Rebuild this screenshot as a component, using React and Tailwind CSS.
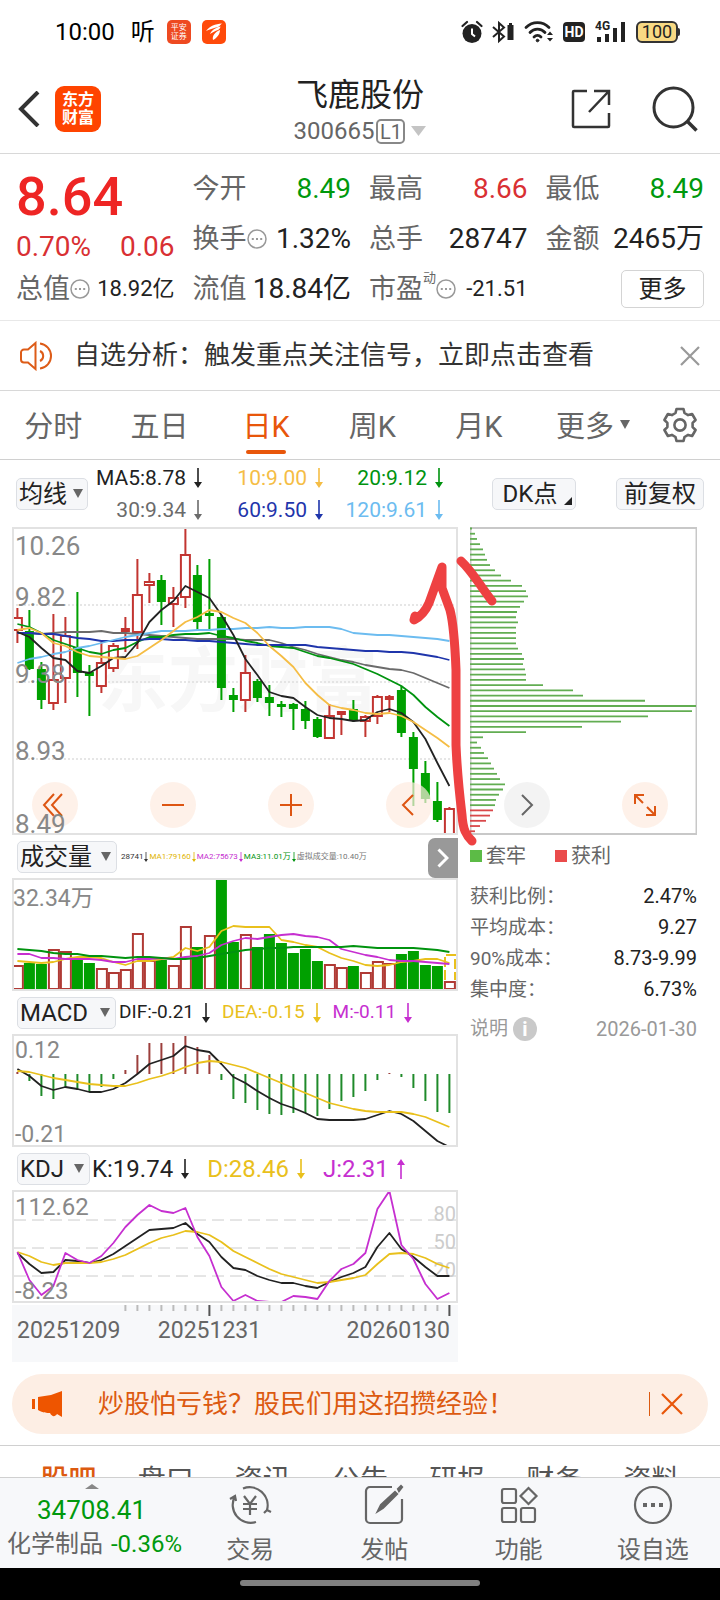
import clsx from "clsx";

const RED = "#c23531";
const GREEN = "#00a000";

// [up, high, body top, body bottom, low]
const candles = [
  [1, 81, 90, 104, 116], [0, 83, 104, 142, 143], [0, 135, 142, 173, 182], [1, 87, 152, 177, 183],
  [1, 90, 108, 152, 176], [0, 65, 120, 146, 170], [0, 138, 145, 149, 189], [1, 115, 135, 160, 166],
  [1, 116, 118, 142, 145], [1, 90, 101, 105, 125], [1, 32, 67, 106, 122], [1, 46, 54, 59, 76],
  [0, 48, 53, 75, 98], [1, 60, 70, 78, 100], [1, 1, 27, 71, 81], [0, 38, 48, 95, 103],
  [0, 32, 86, 88, 103], [0, 88, 90, 161, 173], [0, 161, 168, 173, 185], [1, 128, 145, 174, 185],
  [0, 152, 154, 171, 175], [0, 158, 170, 176, 189], [0, 174, 177, 179, 190], [0, 176, 177, 182, 203],
  [0, 174, 182, 194, 202], [0, 190, 192, 210, 211], [1, 177, 188, 212, 212], [1, 184, 184, 188, 208],
  [0, 173, 182, 194, 195], [1, 188, 189, 195, 210], [1, 168, 169, 190, 197], [1, 168, 169, 173, 185],
  [0, 159, 163, 206, 210], [0, 205, 210, 242, 279], [0, 234, 246, 272, 276], [0, 255, 274, 293, 295],
  [1, 280, 281, 308, 308],
];

const ma = [
  { color: "#6b6b6b", data: [106, 106, 107, 106, 105, 105, 105, 104, 106, 106, 107, 108, 109, 110, 111, 112, 112, 112, 112, 113, 113, 113, 116, 120, 123, 127, 130, 133, 135, 138, 140, 142, 143, 146, 151, 156, 161] },
  { color: "#00930f", data: [97, 100, 106, 113, 117, 121, 125, 127, 123, 121, 115, 110, 110, 108, 107, 107, 106, 109, 111, 114, 116, 119, 120, 121, 125, 129, 131, 134, 137, 142, 147, 153, 159, 168, 180, 190, 199] },
  { color: "#1f35ab", data: [106, 106, 107, 107, 109, 111, 112, 114, 114, 113, 113, 112, 112, 113, 113, 114, 114, 115, 116, 117, 118, 118, 118, 118, 118, 120, 121, 122, 123, 124, 124, 125, 125, 126, 128, 130, 133] },
  { color: "#6cbcf0", data: [136, 132, 130, 127, 125, 121, 119, 116, 113, 110, 108, 106, 104, 104, 104, 103, 103, 102, 102, 101, 101, 100, 101, 101, 100, 100, 100, 102, 106, 107, 108, 108, 109, 110, 111, 112, 114] },
  { color: "#222222", data: [105, 110, 121, 131, 133, 144, 146, 139, 131, 130, 116, 95, 83, 74, 59, 65, 71, 88, 108, 132, 148, 165, 169, 171, 180, 188, 191, 192, 194, 193, 185, 182, 186, 195, 212, 236, 259] },
  { color: "#f5bd45", data: [103, 101, 106, 116, 119, 125, 129, 130, 131, 132, 129, 121, 113, 104, 95, 90, 83, 85, 91, 96, 106, 119, 129, 140, 156, 168, 178, 181, 183, 186, 187, 186, 189, 195, 203, 211, 220] },
];

const volumes = [
  [1, 87], [0, 85], [0, 86], [1, 71], [1, 73], [0, 80], [0, 85], [1, 90], [1, 94], [1, 91], [1, 55], [1, 82], [0, 82],
  [1, 87], [1, 48], [0, 69], [1, 57], [0, 1], [0, 64], [1, 56], [0, 69], [0, 56], [0, 65], [0, 75], [0, 71], [0, 83],
  [1, 86], [1, 89], [0, 88], [1, 94], [1, 83], [1, 85], [0, 76], [0, 73], [0, 87], [0, 88], [1, 103],
];

const volumeMa = [
  { color: "#e9c01c", data: [83, 84, 85, 84, 81, 79, 79, 80, 84, 87, 83, 83, 81, 79, 70, 73, 69, 53, 48, 49, 49, 49, 62, 64, 67, 69, 75, 80, 83, 87, 88, 87, 84, 83, 81, 81, 85] },
  { color: "#c62fd0", data: [76, 76, 80, 80, 81, 81, 81, 82, 84, 84, 81, 81, 80, 81, 79, 78, 75, 67, 63, 60, 61, 59, 57, 56, 58, 59, 62, 71, 74, 77, 79, 82, 83, 83, 84, 85, 86] },
  { color: "#00930f", data: [71, 72, 73, 75, 76, 76, 78, 78, 79, 80, 79, 79, 80, 81, 81, 80, 78, 76, 74, 72, 71, 70, 70, 69, 69, 69, 69, 69, 68, 69, 70, 70, 70, 70, 71, 72, 74] },
];

const macdBars = [
  38, 47, 62, 65, 53, 56, 58, 53, 45, 36, 21, 9, 9, 9, 0, 13, 21, 46, 65, 69, 76, 80, 81, 79, 79, 82, 75, 67, 63, 57, 46,
  39, 43, 54, 67, 78, 79,
];

const macdLines = [
  { color: "#222222", data: [35, 42, 52, 56, 53, 55, 58, 58, 55, 49, 40, 30, 26, 22, 12, 16, 18, 30, 43, 49, 57, 64, 70, 74, 79, 85, 86, 86, 86, 85, 81, 77, 80, 87, 97, 107, 113] },
  { color: "#e9c01c", data: [37, 38, 41, 44, 46, 48, 50, 51, 52, 52, 49, 45, 42, 38, 33, 29, 27, 28, 31, 34, 39, 44, 49, 54, 59, 64, 69, 72, 75, 77, 78, 78, 78, 80, 83, 88, 93] },
];

const kdjLines = [
  { color: "#222222", data: [63, 74, 83, 82, 70, 71, 73, 70, 64, 56, 48, 40, 39, 38, 33, 44, 52, 67, 78, 80, 86, 90, 93, 93, 96, 98, 92, 87, 83, 77, 57, 43, 59, 67, 77, 86, 86] },
  { color: "#e9c01c", data: [62, 66, 72, 75, 73, 73, 73, 72, 69, 65, 59, 53, 48, 45, 41, 42, 45, 52, 61, 67, 73, 79, 84, 87, 90, 93, 92, 90, 88, 85, 74, 64, 63, 64, 68, 74, 78] },
  { color: "#c62fd0", data: [62, 90, 105, 96, 63, 70, 73, 66, 53, 37, 25, 15, 21, 23, 18, 47, 66, 97, 111, 105, 111, 112, 112, 106, 107, 109, 91, 79, 74, 63, 19, 1, 55, 69, 94, 109, 103] },
];

const chips = [
  2, 5, 7, 10, 13, 15, 17, 20, 25, 31, 41, 52, 56, 58, 54, 50, 47, 46, 48, 46, 46, 46, 46, 48, 52, 54, 53, 55, 56, 56, 73,
  103, 113, 175, 226, 222, 178, 151, 112, 56, 13, 7, 11, 14, 18, 21, 24, 27, 30, 35, 33, 29, 26, 25, 23, 20, 16, 10, 5,
];

const stats = [
  { label: "获利比例：", value: "2.47%" },
  { label: "平均成本：", value: "9.27" },
  { label: "90%成本：", value: "8.73-9.99" },
  { label: "集中度：", value: "6.73%" },
];

const barX = (i) => 5.4 + i * 12;

const Lines = ({ series }) =>
  series.map(({ color, data }) => (
    <polyline
      key={color}
      points={data.map((y, i) => `${barX(i)},${y}`).join(" ")}
      fill="none"
      stroke={color}
      strokeWidth="1.8"
      strokeLinejoin="round"
    />
  ));

const Arrow = ({ up, className }) => (
  <svg viewBox="0 0 8 20" className={clsx("h-5 w-2 shrink-0", up && "rotate-180", className)} fill="currentColor">
    <path d="M3.2 0h1.6v14H8L4 20 0 14h3.2z" />
  </svg>
);

const Caret = ({ className }) => (
  <svg viewBox="0 0 10 9" preserveAspectRatio="none" className={className} fill="currentColor">
    <path d="M0 0h10L5 9z" />
  </svg>
);

const IndicatorSelect = ({ name, label, className, caret }) => (
  <label className={clsx("relative shrink-0", className)}>
    <span className="sr-only">{label}</span>
    <select className="block h-8 w-full appearance-none rounded-[5px] border border-[#dcdfe4] bg-[#f6f7f9] pl-0.5 text-2xl leading-[30px] text-[#222]">
      <option>{name}</option>
    </select>
    <Caret className={clsx("pointer-events-none absolute top-[11px] h-[9px] w-[10px] text-[#666]", caret)} />
  </label>
);

const Dots = () => (
  <svg viewBox="0 0 20 20" className="h-5 w-5 shrink-0" fill="none" stroke="#999" strokeWidth="1.5">
    <circle cx="10" cy="10" r="9" />
    <path d="M4.8 10h2M9 10h2M13.2 10h2" strokeWidth="2.2" />
  </svg>
);

const Quote = ({ label, value, color = "text-[#222]", small, dots, mark }) => (
  <div className="flex items-center justify-between whitespace-nowrap leading-[50px]">
    <span className="flex items-center text-[27px] text-[#666]">
      {label}
      {mark && <sup className="-top-3 text-[13px] leading-none">{mark}</sup>}
      {dots && <Dots />}
    </span>
    <span className={clsx(small ? "text-[22px]" : "text-[28px]", color)}>{value}</span>
  </div>
);

const StatusBar = () => (
  <div className="flex h-16 items-center pl-[55px] pr-10 text-2xl text-black">
    <span>10:00</span>
    <span className="ml-4">听</span>
    <span className="ml-3 flex h-6 w-6 flex-col items-center justify-center rounded-[5px] bg-[#ee4a21] text-[8px] leading-[9px] text-white">
      <span>平安</span>
      <span>证券</span>
    </span>
    <span className="ml-[11px] flex h-6 w-6 items-center justify-center rounded-[5px] bg-[#ff4a0a]">
      <svg viewBox="0 0 24 24" className="h-6 w-6" fill="#fff">
        <path d="M4 11C8 6 13 4 20 3.500C18 5 18 6 16 7C12 8 8 9 4 11zM8 14C10 10 13 8 18.500 6.500C18 9 17 9 16 10C13 11 11 12 8 14zM11 20C10 16 13 12 18 10C18 14 15 18 11 20z" />
      </svg>
    </span>
    <div className="ml-auto flex items-center">
      <svg viewBox="0 0 22 24" className="h-6 w-[22px]">
        <circle cx="11" cy="13.500" r="9.500" fill="#222" />
        <path d="M1.500 6L6 2M20.500 6L16 2" stroke="#222" strokeWidth="2.200" strokeLinecap="round" />
        <path d="M11 8.500v5.500l3 2.500" stroke="#fff" strokeWidth="2" fill="none" />
      </svg>
      <svg viewBox="0 0 24 24" className="ml-2 h-6 w-6" fill="none" stroke="#222" strokeWidth="2">
        <path d="M2 7l11 9.500-5 4.500V3l5 4.500L2 17" />
        <path d="M16.500 5h6v15h-6zM18 3h3v3h-3z" fill="#222" stroke="none" />
      </svg>
      <svg viewBox="0 0 32 24" className="ml-2 h-6 w-8" fill="none" stroke="#222" strokeWidth="2.800" strokeLinecap="round">
        <path d="M3 7.500C9.500 1 19.500 1 26 7.500M7 12.500c4-4.500 11-4.500 15 0M11 17c2-2 5-2 7 0" />
        <circle cx="14.500" cy="20.500" r="1.300" fill="#222" strokeWidth="1" />
        <path d="M24 15l3-3.500 3 3.500zM24 18l3 3.500 3-3.500z" fill="#222" stroke="none" />
      </svg>
      <span className="ml-2 flex h-5 w-[22px] items-center justify-center rounded-[4px] bg-[#222] text-sm font-bold leading-5 text-white">
        HD
      </span>
      <svg viewBox="0 0 32 24" className="ml-[10px] h-6 w-8" fill="#222">
        <text x="0" y="10" fontSize="12" fontWeight="700">4G</text>
        <path d="M2 17h4v5H2zM10 14h4v8h-4zM18 8h4v14h-4zM26 2h4v20h-4z" />
      </svg>
      <span className="ml-[9px] flex h-[22px] w-[42px] items-center justify-center rounded-[6px] border-2 border-[#333] bg-[#f8d983] text-lg leading-4 text-[#222]">
        100
      </span>
      <span className="h-2 w-[2px] rounded-r bg-[#333]" />
    </div>
  </div>
);

const Header = () => (
  <header className="flex h-[90px] justify-between border-b border-[#d8d8d8] pl-[18px] pr-[22px]">
    <div className="flex flex-1 items-center">
      <button aria-label="返回">
        <svg viewBox="0 0 22 36" className="h-9 w-[22px]" fill="none" stroke="#333" strokeWidth="4">
          <path d="M20 1L3 18l17 17" />
        </svg>
      </button>
      <span className="ml-[15px] flex h-[46px] w-[46px] flex-col items-center justify-center rounded-[9px] bg-[#ff4400] text-base font-bold leading-[18px] text-white">
        <span>东方</span>
        <span>财富</span>
      </span>
    </div>
    <div className="flex flex-col items-center pl-1 pt-3">
      <h1 className="text-[32px] leading-[38px] text-[#222]">飞鹿股份</h1>
      <button className="flex items-center text-2xl leading-[34px] text-[#666]">
        300665
        <span className="ml-0.5 h-[25px] w-[29px] rounded-[5px] border-2 border-[#888] text-center text-xl leading-[22px]">L1</span>
        <Caret className="ml-1.5 h-[10px] w-[15px] text-[#c4c4c4]" />
      </button>
    </div>
    <div className="flex flex-1 items-center justify-end gap-10">
      <button aria-label="分享">
        <svg viewBox="0 0 42 42" className="h-[42px] w-[42px]" fill="none" stroke="#333" strokeWidth="2.500">
          <path d="M17 3H4a1 1 0 0 0-1 1v34a1 1 0 0 0 1 1h34a1 1 0 0 0 1-1V25M24 3h15v14M39 3L19 24" />
        </svg>
      </button>
      <button aria-label="搜索">
        <svg viewBox="0 0 46 46" className="h-[46px] w-[46px]" fill="none" stroke="#333" strokeWidth="3">
          <circle cx="21.500" cy="21.500" r="19.500" />
          <path d="M35 35l9.500 9.500" strokeWidth="3.500" />
        </svg>
      </button>
    </div>
  </header>
);

const QuotePanel = () => (
  <section className="grid grid-cols-4 gap-x-[18px] border-b border-[#e8e8e8] px-4 pb-1.5 pt-[10px]">
    <div className="row-span-2 text-[#d93033]">
      <div className="text-[54px] font-medium leading-[66px] text-[#ee2524]">8.64</div>
      <div className="flex justify-between text-[28px] leading-[34px]">
        <span>0.70%</span>
        <span>0.06</span>
      </div>
    </div>
    <Quote label="今开" value="8.49" color="text-[#00990d]" />
    <Quote label="最高" value="8.66" color="text-[#d93033]" />
    <Quote label="最低" value="8.49" color="text-[#00990d]" />
    <Quote label="换手" value="1.32%" dots />
    <Quote label="总手" value="28747" />
    <Quote label="金额" value="2465万" />
    <Quote label="总值" value="18.92亿" small dots />
    <Quote label="流值" value="18.84亿" />
    <Quote label="市盈" value="-21.51" small dots mark="动" />
    <div className="flex items-center justify-end">
      <button className="h-[38px] w-[83px] rounded-[5px] border border-[#d4d4d4] text-2xl leading-9 text-[#222]">更多</button>
    </div>
  </section>
);

const Notice = () => (
  <div className="flex h-[70px] items-center border-b border-[#d8d8d8] px-5 text-[26px] text-[#333]">
    <svg viewBox="0 0 34 30" className="h-[30px] w-[34px]" fill="none" stroke="#dd5c18" strokeWidth="2">
      <path d="M15.500 2v26L8 21.500H4a3 3 0 0 1-3-3v-7a3 3 0 0 1 3-3h4zM20 10a5.500 5.500 0 0 1 0 10M20 2.500a12.600 12.600 0 0 1 0 25" />
    </svg>
    <span className="ml-5">自选分析：触发重点关注信号，立即点击查看</span>
    <button aria-label="关闭" className="ml-auto">
      <svg viewBox="0 0 20 20" className="h-5 w-5" fill="none" stroke="#999" strokeWidth="2.200">
        <path d="M1 1l18 18M19 1L1 19" />
      </svg>
    </button>
  </div>
);

const Tabs = () => (
  <nav className="flex h-[69px] border-b border-[#d0d0d0] pr-[14px] text-[29px] text-[#666]">
    {["分时", "五日", "日K", "周K", "月K"].map((tab) => (
      <button key={tab} className={clsx("relative flex-1 pt-1.5", tab === "日K" && "text-[#e8560a]")}>
        {tab}
        {tab === "日K" && <span className="absolute inset-x-0 bottom-[5px] mx-auto h-1 w-10 rounded-full bg-[#e8560a]" />}
      </button>
    ))}
    <button className="flex w-[122px] items-center justify-center gap-1.5 pt-1.5">
      更多
      <Caret className="mb-2 h-[9px] w-[10px]" />
    </button>
    <button aria-label="设置" className="flex w-[52px] items-center justify-center">
      <svg viewBox="-18 -18 36 36" className="h-9 w-9" fill="none" stroke="#666" strokeWidth="2.600" strokeLinejoin="round">
        <path d="M-4.500-12L-3.500-16H3.500L4.500-12 8.100-9.900 12.100-11 15.600-5 12.600-2.100V2.100L15.600 5 12.100 11 8.100 9.900 4.500 12 3.500 16H-3.500L-4.500 12-8.100 9.900-12.100 11-15.600 5-12.600 2.100V-2.100L-15.600-5-12.100-11-8.100-9.900z" />
        <circle r="5.600" />
      </svg>
    </button>
  </nav>
);

const Toolbar = () => (
  <div className="flex h-[67px] items-center pl-4 pr-4">
    <IndicatorSelect name="均线" label="主图指标" className="w-[72px]" caret="right-[5px]" />
    <div className="grid flex-1 grid-cols-[114fr_121fr_120fr] gap-y-1 text-[21px] leading-7">
      {[
        ["MA5:8.78", "text-[#222]"],
        ["10:9.00", "text-[#f5bd45]"],
        ["20:9.12", "text-[#00930f]"],
        ["30:9.34", "text-[#6b6b6b]"],
        ["60:9.50", "text-[#1f35ab]"],
        ["120:9.61", "text-[#6cbcf0]"],
      ].map(([text, color]) => (
        <span key={text} className={clsx("flex items-center justify-end gap-2", color)}>
          {text}
          <Arrow />
        </span>
      ))}
    </div>
    <button className="relative ml-[49px] h-8 w-[84px] rounded-[5px] border border-[#dcdfe4] bg-[#f6f7f9] pr-2 text-2xl leading-[30px] text-[#222]">
      DK点
      <svg viewBox="0 0 8 8" className="absolute bottom-1 right-[3px] h-2 w-2" fill="#222">
        <path d="M8 0v8H0z" />
      </svg>
    </button>
    <button className="ml-10 h-8 w-[88px] rounded-[5px] border border-[#dcdfe4] bg-[#f6f7f9] text-2xl leading-[30px] text-[#222]">
      前复权
    </button>
  </div>
);

const Plot = ({ height, children }) => (
  <svg viewBox={`0 0 446 ${height}`} preserveAspectRatio="none" className="relative block h-full w-full">
    {children}
    <rect x="1" y="1" width="444" height={height - 2} fill="none" stroke="#e2e2e2" strokeWidth="2" />
  </svg>
);

const PriceChart = () => (
  <div className="relative h-[308px]">
    <div className="absolute inset-x-0 top-[119px] pl-[86px] text-[70px] font-bold leading-[72px] text-[#f7f7f7]">东方财富</div>
    <Plot height={308}>
      {[78, 155, 232].map((y) => (
        <path key={y} d={`M0 ${y}h446`} stroke="#dedede" strokeWidth="1.500" strokeDasharray="2 2" />
      ))}
      {candles.map(([up, high, top, bottom, low], i) => {
        const x = barX(i);
        const hollow = up && bottom - top > 4;
        return (
          <g key={i} stroke={up ? RED : GREEN} strokeWidth="2">
            <path d={`M${x} ${high}V${top}M${x} ${bottom}V${low}`} />
            <rect
              x={x - (hollow ? 4.5 : 3.5)}
              y={top + 1}
              width={hollow ? 9 : 7}
              height={Math.max(bottom - top - 2, 1)}
              fill={hollow ? "#fff" : up ? RED : GREEN}
            />
          </g>
        );
      })}
      <Lines series={ma} />
    </Plot>
    <div className="pointer-events-none absolute inset-0 z-10 text-[26px] leading-8 text-[#888]">
      <span className="absolute left-[3px] top-[3px]">10.26</span>
      <span className="absolute left-[3px] top-[54px]">9.82</span>
      <span className="absolute left-[3px] top-[131px]">9.38</span>
      <span className="absolute left-[3px] top-[208px]">8.93</span>
      <span className="absolute left-[3px] top-[281px]">8.49</span>
    </div>
  </div>
);

const VolumeChart = () => (
  <>
    <div className="flex h-[43px] items-center pl-[5px]">
      <IndicatorSelect name="成交量" label="副图指标一" className="w-[100px]" caret="right-[6px]" />
      <div className="ml-1 flex items-center gap-px whitespace-nowrap text-[8px] text-[#333]">
        <span>28741</span>
        <Arrow className="h-3! w-1!" />
        <span className="text-[#e0b400]">MA1:79160</span>
        <Arrow className="h-3! w-1! text-[#e0b400]" />
        <span className="text-[#c62fd0]">MA2:75673</span>
        <Arrow className="h-3! w-1! text-[#c62fd0]" />
        <span className="text-[#00930f]">MA3:11.01万</span>
        <Arrow className="h-3! w-1! text-[#00930f]" />
        <span className="text-[#777]">虚拟成交量:10.40万</span>
      </div>
      <button aria-label="展开" className="ml-auto flex h-10 w-[30px] items-center justify-center self-end rounded-l-[7px] bg-[#999]">
        <svg viewBox="0 0 12 20" className="h-5 w-3" fill="none" stroke="#fff" strokeWidth="3">
          <path d="M1.500 1.500L10 10l-8.500 8.500" />
        </svg>
      </button>
    </div>
    <div className="relative h-[113px]">
      <Plot height={113}>
        {volumes.map(([up, top], i) => (
          <rect
            key={i}
            x={barX(i) - (up ? 4.5 : 5.5)}
            y={up ? top + 1 : top}
            width={up ? 10 : 11}
            height={up ? 110 - top : 112 - top}
            fill={up ? "#fff" : GREEN}
            stroke={up ? "#b03a35" : "none"}
            strokeWidth="2"
          />
        ))}
        <path d="M433 102V77h10v25" fill="none" stroke="#e9c01c" strokeWidth="2" strokeDasharray="10 3" />
        <Lines series={volumeMa} />
      </Plot>
      <span className="absolute left-px top-[5px] text-[23px] leading-8 text-[#888]">32.34万</span>
    </div>
  </>
);

const MacdChart = () => (
  <>
    <div className="flex h-[43px] items-center pl-[5px]">
      <IndicatorSelect name="MACD" label="副图指标二" className="w-[99px]" caret="right-[6px]" />
      <div className="ml-[3px] flex items-center gap-2 whitespace-nowrap text-[19px] text-[#222]">
        <span>DIF:-0.21</span>
        <Arrow />
        <span className="ml-1 text-[#e9c01c]">DEA:-0.15</span>
        <Arrow className="text-[#e9c01c]" />
        <span className="ml-1 text-[#c62fd0]">M:-0.11</span>
        <Arrow className="text-[#c62fd0]" />
      </div>
    </div>
    <div className="relative h-[113px]">
      <Plot height={113}>
        {macdBars.map((y, i) => (
          <path key={i} d={`M${barX(i)} 40V${y}`} stroke={y < 40 ? "#9c3f3c" : "#1f8a2a"} strokeWidth="2" />
        ))}
        <Lines series={macdLines} />
      </Plot>
      <span className="absolute left-[3px] top-[1px] text-[23px] leading-8 text-[#888]">0.12</span>
      <span className="absolute left-[3px] top-[85px] text-[23px] leading-8 text-[#888]">-0.21</span>
    </div>
  </>
);

const KdjChart = () => (
  <>
    <div className="flex h-[43px] items-center pl-[5px]">
      <IndicatorSelect name="KDJ" label="副图指标三" className="w-[73px]" caret="right-[6px]" />
      <div className="ml-0.5 flex items-center gap-2 whitespace-nowrap text-2xl text-[#222]">
        <span>K:19.74</span>
        <Arrow />
        <span className="ml-2.5 text-[#e9c01c]">D:28.46</span>
        <Arrow className="text-[#e9c01c]" />
        <span className="ml-2.5 text-[#c62fd0]">J:2.31</span>
        <Arrow up className="text-[#c62fd0]" />
      </div>
    </div>
    <div className="relative h-[113px]">
      <div className="absolute inset-0 text-right text-xl leading-7 text-[#ccc]">
        <span className="absolute right-[2px] top-[10px]">80</span>
        <span className="absolute right-[2px] top-[38px]">50</span>
        <span className="absolute right-[2px] top-[66px]">20</span>
      </div>
      <Plot height={113}>
        {[30, 58, 86].map((y) => (
          <path key={y} d={`M2 ${y}h442`} stroke="#ccc" strokeWidth="1" strokeDasharray="12 6" />
        ))}
        <Lines series={kdjLines} />
      </Plot>
      <span className="absolute left-[3px] top-[1px] text-2xl leading-8 text-[#888]">112.62</span>
      <span className="absolute left-[3px] top-[85px] text-2xl leading-8 text-[#888]">-8.23</span>
    </div>
    <div className="mt-0.5 h-[57px] bg-[#f7f8fa] text-[23px] text-[#666]">
      <svg viewBox="0 0 446 12" preserveAspectRatio="none" className="block h-3 w-full">
        {candles.slice(9).map((_, i) => {
          const major = i === 7 || i === 27;
          return (
            <path key={i} d={`M${barX(i + 9)} 0v${major ? 11 : 6}`} stroke={major ? "#555" : "#bbb"} strokeWidth="2" />
          );
        })}
      </svg>
      <div className="flex justify-between pl-[5px] pr-2 leading-7">
        <span>20251209</span>
        <span className="mr-12">20251231</span>
        <span>20260130</span>
      </div>
    </div>
  </>
);

const ChipPanel = () => (
  <div>
    <svg viewBox="0 0 227 308" preserveAspectRatio="none" className="block h-[308px] w-full">
      <rect x="0.5" y="1" width="226" height="306" fill="none" stroke="#c8c8c8" strokeWidth="2" />
      {chips.map((w, i) => (
        <path key={i} d={`M0 ${1.5 + i * 5.22}h${w}`} stroke={i > 53 ? "#d9484a" : "#62ad52"} strokeWidth="1.800" />
      ))}
    </svg>
    <div className="flex h-[42px] items-center text-xl text-[#666]">
      <span className="h-3 w-3 bg-[#5cbb46]" />
      <span className="ml-1">套牢</span>
      <span className="ml-[29px] h-3 w-3 bg-[#ea4b4b]" />
      <span className="ml-1">获利</span>
    </div>
    <dl className="mt-1 text-xl leading-[31px]">
      {stats.map(({ label, value }) => (
        <div key={label} className="flex justify-between">
          <dt className="text-[19px] text-[#666]">{label}</dt>
          <dd className="text-[#222]">{value}</dd>
        </div>
      ))}
    </dl>
    <div className="mt-2 flex items-center text-xl leading-8 text-[#999]">
      <span className="text-[19px]">说明</span>
      <button aria-label="说明" className="ml-[5px] h-6 w-6 rounded-full bg-[#c9c9c9] text-center font-bold leading-6 text-white">
        i
      </button>
      <span className="ml-auto">2026-01-30</span>
    </div>
  </div>
);

const controls = [
  { label: "最早", d: "M-1-11l-10 11 10 11M7-11l-10 11 10 11" },
  { label: "缩小", d: "M-11 0h22" },
  { label: "放大", d: "M-11 0h22M0-11v22" },
  { label: "前一日", d: "M4-10l-10 10 10 10" },
  { label: "后一日", d: "M-5-10l10 10-10 10", gray: true },
  { label: "全屏", d: "M-10-1v-9h9M-10-10l8 8M10 1v9h-9M10 10l-8-8" },
];

const Charts = () => (
  <section className="relative grid grid-cols-[446fr_227fr] gap-3 pl-3 pr-[23px]">
    <div>
      <PriceChart />
      <VolumeChart />
      <MacdChart />
      <KdjChart />
    </div>
    <ChipPanel />
    <div className="absolute left-8 right-[52px] top-[255px] flex justify-between">
      {controls.map(({ label, d, gray }) => (
        <button
          key={label}
          aria-label={label}
          className={clsx("h-[46px] w-[46px] rounded-full", gray ? "bg-[#efefef]/75" : "bg-[#fdebe0]/70")}
        >
          <svg viewBox="-23 -23 46 46" fill="none" stroke={gray ? "#666" : "#dd5512"} strokeWidth="2">
            <path d={d} />
          </svg>
        </button>
      ))}
    </div>
    {/* Hand-drawn arrow */}
    <svg
      viewBox="0 0 720 320"
      preserveAspectRatio="none"
      className="pointer-events-none absolute left-0 top-0 z-20 h-[320px] w-full overflow-visible"
      fill="none"
      stroke="#ee4142"
      strokeWidth="9"
      strokeLinecap="round"
      strokeLinejoin="round"
    >
      <path d="M415 89l-1 4c6-3 12-10 15-17l13-36v21l8 22c4 15 5 35 6 60v75c1 25 3 45 6 70 1 15 4 20 10 26" />
      <path d="M461 34c11 10 20 26 31 40" />
    </svg>
  </section>
);

const Banner = () => (
  <div className="mx-3 mb-[11px] mt-3 flex h-[60px] items-center rounded-full bg-[#fdeee4] pl-5 pr-[25px] text-[26px] text-[#dc5a10]">
    <svg viewBox="0 0 30 28" className="h-7 w-[30px]" fill="#ee5500">
      <path d="M0 9h3v10H0zM6 7l13-2L30 1v26l-5-3c-2 3-5 3-7-1-3 0-7 0-12-3z" />
    </svg>
    <a href="#experience" className="ml-9">炒股怕亏钱？股民们用这招攒经验！</a>
    <span className="ml-auto h-6 w-px bg-[#dc5a10]" />
    <button aria-label="关闭" className="ml-[11px]">
      <svg viewBox="0 0 22 22" className="h-[22px] w-[22px]" fill="none" stroke="#e8560a" strokeWidth="2.200">
        <path d="M1 1l20 20M21 1L1 21" />
      </svg>
    </button>
  </div>
);

const Sections = () => (
  <nav className="flex h-8 items-start overflow-hidden border-t border-[#d0d0d0] px-5 pt-[19px] text-[28px] leading-8 text-[#555]">
    {["股吧", "盘口", "资讯", "公告", "研报", "财务", "资料"].map((name, i) => (
      <a key={name} href={`#section-${i}`} className={clsx("flex-1 text-center", i === 0 && "font-medium text-[#dc5a10]")}>
        {name}
      </a>
    ))}
  </nav>
);

const actions = [
  {
    label: "交易",
    icon: (
      <>
        <path d="M13 3.500a18 18 0 0 1 24 21.500M26 37a18 18 0 0 1-21-26M0 14l5-3 1 5M34 28l3-3 4 2" />
        <path d="M14 11l6 8 6-8M20 19v11M13 19h14M13 24h14" />
      </>
    ),
  },
  {
    label: "发帖",
    icon: (
      <>
        <path d="M28 2H6a4 4 0 0 0-4 4v28a4 4 0 0 0 4 4h28a4 4 0 0 0 4-4V14" />
        <path d="M14 26l3-6L31 7l2 2-14 14zM34 4l3-3 1 1-3 4z" fill="#666" />
      </>
    ),
  },
  {
    label: "功能",
    icon: (
      <>
        <rect x="3" y="4" width="14" height="14" rx="2" />
        <rect x="3" y="23" width="14" height="14" rx="2" />
        <rect x="22" y="23" width="14" height="14" rx="2" />
        <path d="M29.500 3l8 8-8 8-8-8z" />
      </>
    ),
  },
  {
    label: "设自选",
    icon: (
      <>
        <circle cx="20" cy="20" r="18" />
        <path d="M10 20h4M18 20h4M26 20h4" strokeWidth="4" />
      </>
    ),
  },
];

const BottomBar = () => (
  <footer>
    <div className="flex h-[91px] border-t border-[#d0d0d0] bg-[#f7f8fa] text-2xl text-[#666]">
      <button className="flex w-[183px] flex-col items-center whitespace-nowrap pt-1.5 text-[#00990d]">
        <Caret className="h-[5px] w-[14px] rotate-180 text-[#888]" />
        <span className="mt-1 text-[26px] leading-[34px]">34708.41</span>
        <span className="flex gap-2 pl-1.5 leading-[34px]">
          <span className="text-[#666]">化学制品</span>
          <span>-0.36%</span>
        </span>
      </button>
      {actions.map(({ label, icon }) => (
        <button key={label} className="flex flex-1 flex-col items-center pt-[7px]">
          <svg viewBox="0 0 40 40" className="h-10 w-10 overflow-visible" fill="none" stroke="#666" strokeWidth="2.200">
            {icon}
          </svg>
          <span className="mt-2 leading-[34px]">{label}</span>
        </button>
      ))}
    </div>
    <div className="flex h-8 justify-center bg-black pt-3">
      <div className="h-1.5 w-1/3 rounded-full bg-[#808080]" />
    </div>
  </footer>
);

export default function App() {
  return (
    <div className="min-h-screen bg-white font-[Roboto,'Noto_Sans_CJK_SC',sans-serif]">
      <StatusBar />
      <Header />
      <QuotePanel />
      <Notice />
      <Tabs />
      <Toolbar />
      <Charts />
      <Banner />
      <Sections />
      <BottomBar />
    </div>
  );
}
